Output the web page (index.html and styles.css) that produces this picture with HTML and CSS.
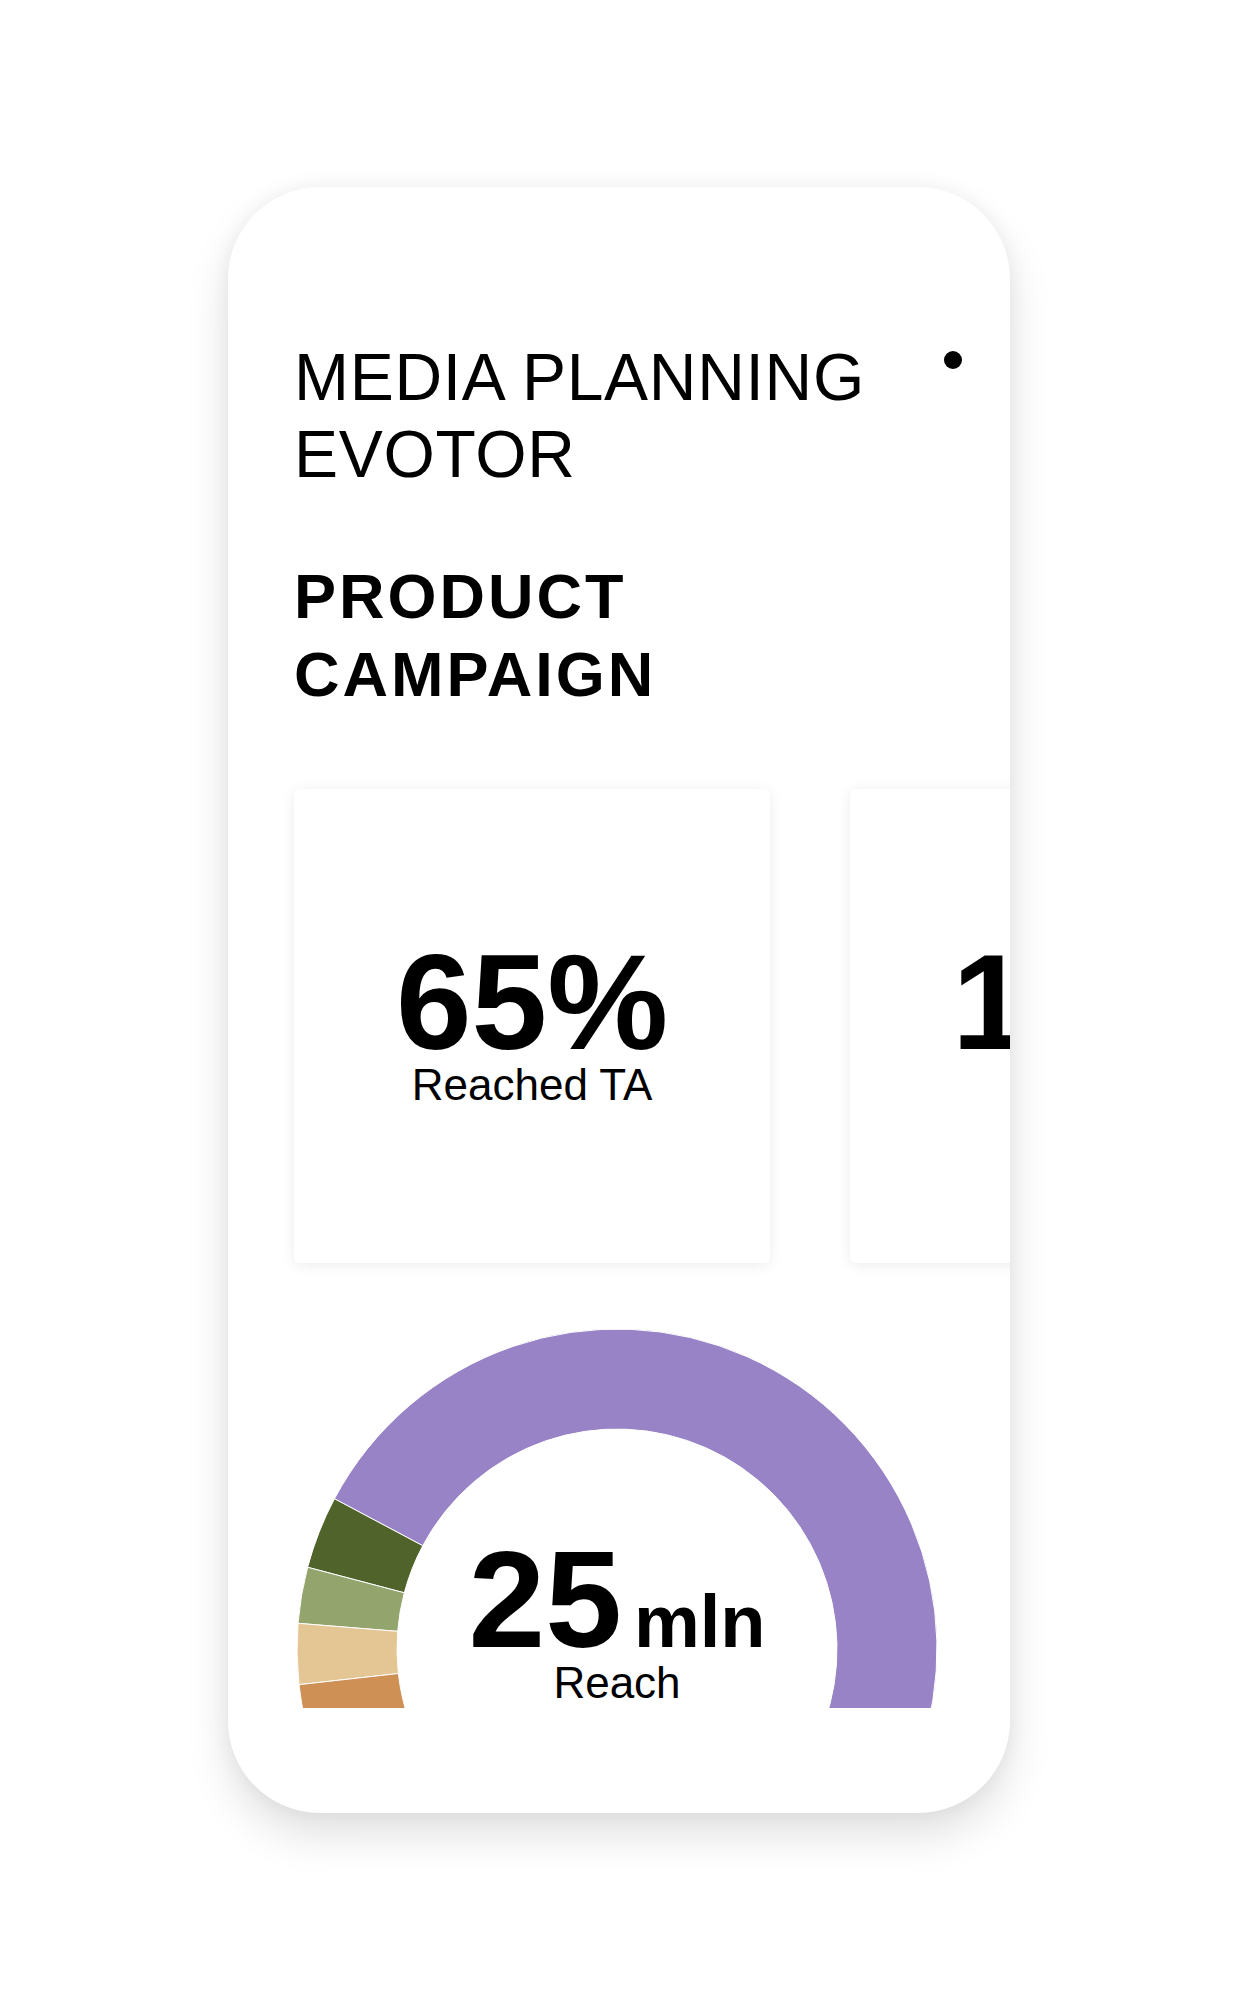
FILE: index.html
```html
<!DOCTYPE html>
<html lang="en">
<head>
<meta charset="utf-8">
<title>Media Planning Evotor</title>
<link rel="stylesheet" href="styles.css">
</head>
<body>
<main class="stage">
  <section class="phone">
    <header class="head">
      <h1 class="title">MEDIA PLANNING<br>EVOTOR</h1>
      <span class="dot"></span>
    </header>
    <h2 class="subtitle">PRODUCT<br>CAMPAIGN</h2>
    <div class="cards">
      <div class="card">
        <div class="value">65%</div>
        <div class="label">Reached TA</div>
      </div>
      <div class="card">
        <div class="value">12%</div>
        <div class="label">Days</div>
      </div>
    </div>
    <div class="gauge">
      <svg class="gauge-chart" width="640" height="379" viewBox="0 0 640 379">
        <g stroke="#ffffff" stroke-width="1">
          <path fill="#9783C5" d="M37.46 169.77 A320 320 0 0 1 620.70 429.45 L526.73 395.24 A220 220 0 0 0 125.75 216.72 Z"/>
          <path fill="#4F632B" d="M10.62 238.26 A320 320 0 0 1 37.46 169.77 L125.75 216.72 A220 220 0 0 0 107.30 263.80 Z"/>
          <path fill="#93A56D" d="M1.03 294.34 A320 320 0 0 1 10.62 238.26 L107.30 263.80 A220 220 0 0 0 100.71 302.36 Z"/>
          <path fill="#E4C594" d="M1.99 355.67 A320 320 0 0 1 1.03 294.34 L100.71 302.36 A220 220 0 0 0 101.37 344.52 Z"/>
          <path fill="#CF9055" d="M19.30 429.45 A320 320 0 0 1 1.99 355.67 L101.37 344.52 A220 220 0 0 0 113.27 395.24 Z"/>
        </g>
      </svg>
      <div class="gauge-text">
        <div class="gauge-value">25<span class="unit">mln</span></div>
        <div class="label">Reach</div>
      </div>
    </div>
  </section>
</main>
</body>
</html>
```

FILE: styles.css
```css
* {
  box-sizing: border-box;
  margin: 0;
  padding: 0;
}

html,
body {
  background: #ffffff;
}

body {
  font-family: "Liberation Sans", Arial, sans-serif;
  color: #000000;
}

.stage {
  padding: 187px 0 120px 228px;
}

.phone {
  width: 782px;
  height: 1626px;
  background: #ffffff;
  border-radius: 92px;
  box-shadow: 0 22px 44px rgba(0, 0, 0, 0.12), 0 0 20px rgba(0, 0, 0, 0.05);
  overflow: hidden;
  padding: 152px 0 0 66px;
}

.head {
  display: flex;
  justify-content: space-between;
  align-items: flex-start;
  padding-right: 48px;
}

.title {
  font-size: 66px;
  font-weight: 400;
  line-height: 77px;
  letter-spacing: 0.7px;
}

.dot {
  width: 18px;
  height: 18px;
  border-radius: 50%;
  background: #000000;
  margin-top: 12px;
}

.subtitle {
  margin-top: 64px;
  font-size: 63px;
  font-weight: 700;
  line-height: 78px;
  letter-spacing: 3px;
}

.cards {
  display: flex;
  gap: 80px;
  margin-top: 76px;
}

.card {
  flex: 0 0 476px;
  height: 474px;
  background: #ffffff;
  border-radius: 6px;
  box-shadow: 0 2px 14px rgba(0, 0, 0, 0.08);
  display: flex;
  flex-direction: column;
  align-items: center;
  justify-content: center;
}

.value {
  font-size: 136px;
  font-weight: 700;
  line-height: 110px;
}

.label {
  font-size: 44px;
  font-weight: 400;
  line-height: 42px;
  margin-top: 7px;
}

.gauge {
  position: relative;
  width: 640px;
  height: 379px;
  margin: 66px 0 0 3px;
}

.gauge-chart {
  display: block;
}

.gauge-text {
  position: absolute;
  left: 0;
  right: 0;
  top: 210px;
  text-align: center;
}

.gauge-value {
  font-size: 138px;
  font-weight: 700;
  line-height: 120px;
}

.unit {
  font-size: 74px;
  line-height: 1;
  margin-left: 12px;
}

.gauge-text .label {
  margin-top: 3px;
}
```
